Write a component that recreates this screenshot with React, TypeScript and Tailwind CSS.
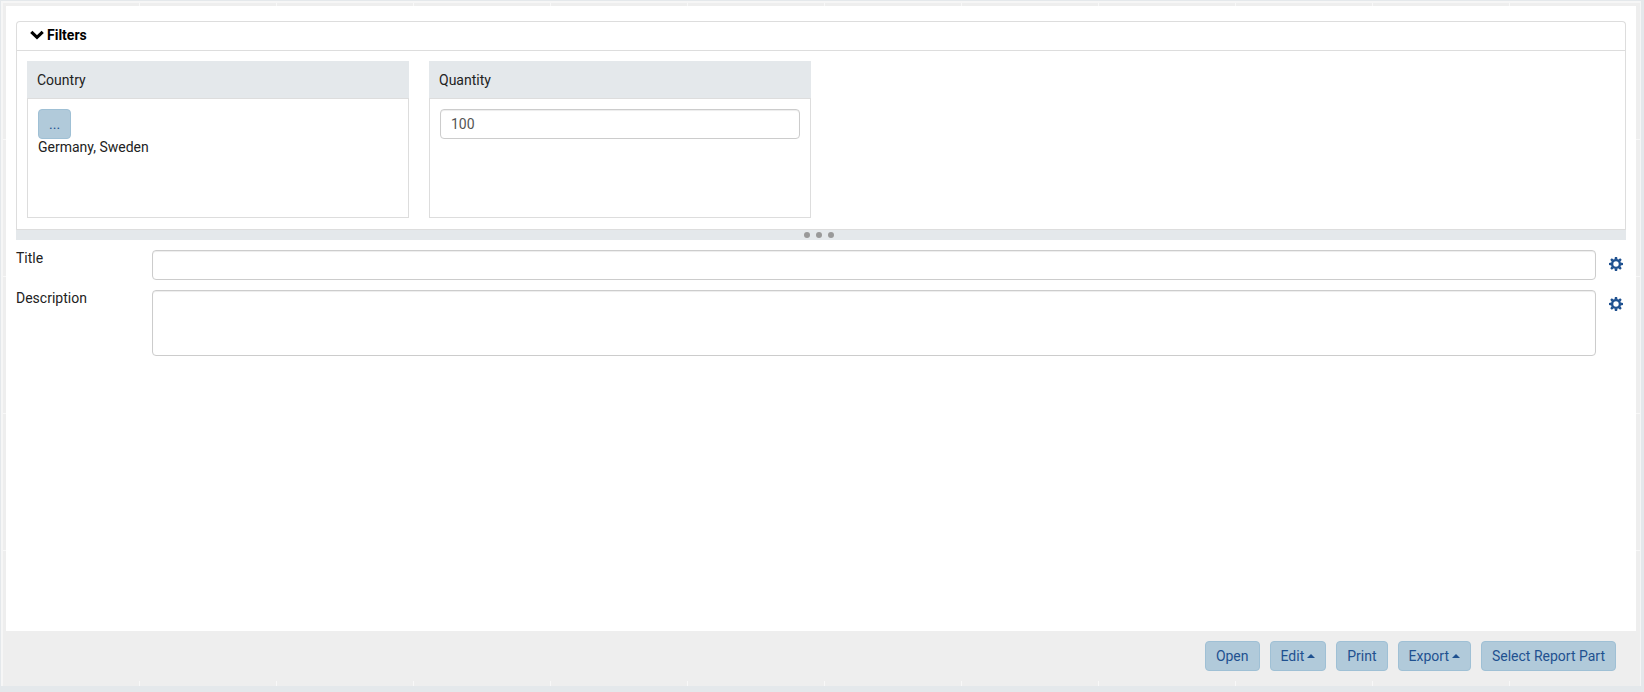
import { useState } from 'react';
import type { ReactNode } from 'react';

const COG_ANGLES = [0, 45, 90, 135];

const FIELD =
  'block w-full rounded border border-[#cccccc] bg-white px-2.5 text-sm text-[#555555] shadow-[inset_0_1px_1px_rgba(0,0,0,0.075)] outline-none focus:border-[#66afe9]';

function ChevronDown() {
  return (
    <svg viewBox="0 0 14 14" className="h-3.5 w-3.5" aria-hidden="true">
      <path d="M1.3 3.8 7 9.3 12.7 3.8" fill="none" stroke="currentColor" strokeWidth="3.2" />
    </svg>
  );
}

function Cog() {
  return (
    <svg viewBox="-7 -7 14 14" className="h-3.5 w-3.5" aria-hidden="true">
      <circle r="3.9" fill="none" stroke="currentColor" strokeWidth="2.4" />
      {COG_ANGLES.map((angle) => (
        <g key={angle} transform={`rotate(${angle})`} fill="currentColor">
          <path d="M-1.5-4.6-1.1-7h2.2l.4 2.4zM-1.5 4.6-1.1 7h2.2l.4-2.4z" />
        </g>
      ))}
    </svg>
  );
}

function CaretUp() {
  return (
    <svg viewBox="0 0 8 4" className="h-1 w-2" aria-hidden="true">
      <path d="M0 4 4 0l4 4z" fill="currentColor" />
    </svg>
  );
}

function Button({ children, label, menu }: { children: ReactNode; label?: string; menu?: boolean }) {
  return (
    <button
      type="button"
      aria-label={label}
      aria-haspopup={menu ? 'menu' : undefined}
      className="flex h-[30px] cursor-pointer items-center gap-[3px] rounded border border-[#9fc0d5] bg-[#b1cada] px-2.5 text-sm text-[#1f5190] hover:bg-[#a2c0d3]"
    >
      {children}
      {menu && <CaretUp />}
    </button>
  );
}

function FilterCard({ title, htmlFor, children }: { title: string; htmlFor?: string; children: ReactNode }) {
  return (
    <div className="px-2.5">
      <section className="flex h-[157px] flex-col border border-[#dddddd]">
        <h3 className="-mx-px -mt-px flex h-[38px] items-center border-b border-[#dddddd] bg-[#e4e8eb] px-2.5">
          {htmlFor ? <label htmlFor={htmlFor}>{title}</label> : title}
        </h3>
        <div className="p-2.5">{children}</div>
      </section>
    </div>
  );
}

function FormRow({ label, id, children }: { label: string; id: string; children: ReactNode }) {
  return (
    <div className="flex items-start">
      <label htmlFor={id} className="w-[136px] shrink-0 leading-4">
        {label}
      </label>
      <div className="min-w-0 flex-1">{children}</div>
      <div className="flex w-[30px] shrink-0 justify-end pt-[7px] pr-[3px]">
        <button type="button" aria-label={`${label} settings`} className="cursor-pointer text-[#1f5190]">
          <Cog />
        </button>
      </div>
    </div>
  );
}

export default function App() {
  const [open, setOpen] = useState(true);
  const [quantity, setQuantity] = useState('100');
  const [title, setTitle] = useState('');
  const [description, setDescription] = useState('');

  return (
    <div className="flex min-h-screen flex-col bg-[#e4e8eb] pt-px pr-[3px] pb-1.5 pl-px font-[Roboto,sans-serif] text-sm leading-5 text-[#222222]">
      <div className="flex flex-1 flex-col bg-[#eeeeee] bg-[linear-gradient(to_right,#f8f8f8_1px,transparent_1px),linear-gradient(to_bottom,#f8f8f8_1px,transparent_1px)] bg-[length:137px_137px] bg-[position:1px_1px] px-[5px] pt-[5px] pb-[5px] shadow-[inset_2px_2px_#f6f6f6,inset_-1px_0_#f6f6f6]">
        <main className="flex-1 bg-white px-2.5 pt-[15px]">
          <section>
            <h2 className="flex h-[29px] items-center rounded-t border border-b-0 border-[#dddddd] px-[13px] pb-0.5 font-bold text-black">
              <button
                type="button"
                aria-expanded={open}
                onClick={() => setOpen(!open)}
                className="flex cursor-pointer items-center gap-[3px]"
              >
                <ChevronDown />
                Filters
              </button>
            </h2>
            {open && (
              <div className="grid grid-cols-4 border-x border-t border-[#dddddd] pt-2.5 pb-[11px]">
                <FilterCard title="Country">
                  <div className="flex">
                    <Button label="Choose countries">...</Button>
                  </div>
                  <p className="leading-4">Germany, Sweden</p>
                </FilterCard>
                <FilterCard title="Quantity" htmlFor="quantity">
                  <input
                    id="quantity"
                    type="text"
                    value={quantity}
                    onChange={(e) => setQuantity(e.target.value)}
                    className={`${FIELD} h-[30px]`}
                  />
                </FilterCard>
              </div>
            )}
            <div
              role="separator"
              className="flex h-[11px] items-center justify-center gap-1.5 border-t border-[#dddddd] bg-[#e4e8eb] pr-1"
            >
              <span className="h-1.5 w-1.5 rounded-full bg-[#999999]" />
              <span className="h-1.5 w-1.5 rounded-full bg-[#999999]" />
              <span className="h-1.5 w-1.5 rounded-full bg-[#999999]" />
            </div>
          </section>

          <form className="flex flex-col gap-2.5 pt-2.5">
            <FormRow label="Title" id="title">
              <input
                id="title"
                type="text"
                value={title}
                onChange={(e) => setTitle(e.target.value)}
                className={`${FIELD} h-[30px]`}
              />
            </FormRow>
            <FormRow label="Description" id="description">
              <textarea
                id="description"
                value={description}
                onChange={(e) => setDescription(e.target.value)}
                className={`${FIELD} h-[66px] resize-none py-1`}
              />
            </FormRow>
          </form>
        </main>

        <footer className="flex flex-wrap justify-end gap-2.5 bg-[#eeeeee] px-5 py-2.5">
          <Button>Open</Button>
          <Button menu>Edit</Button>
          <Button>Print</Button>
          <Button menu>Export</Button>
          <Button>Select Report Part</Button>
        </footer>
      </div>
    </div>
  );
}
